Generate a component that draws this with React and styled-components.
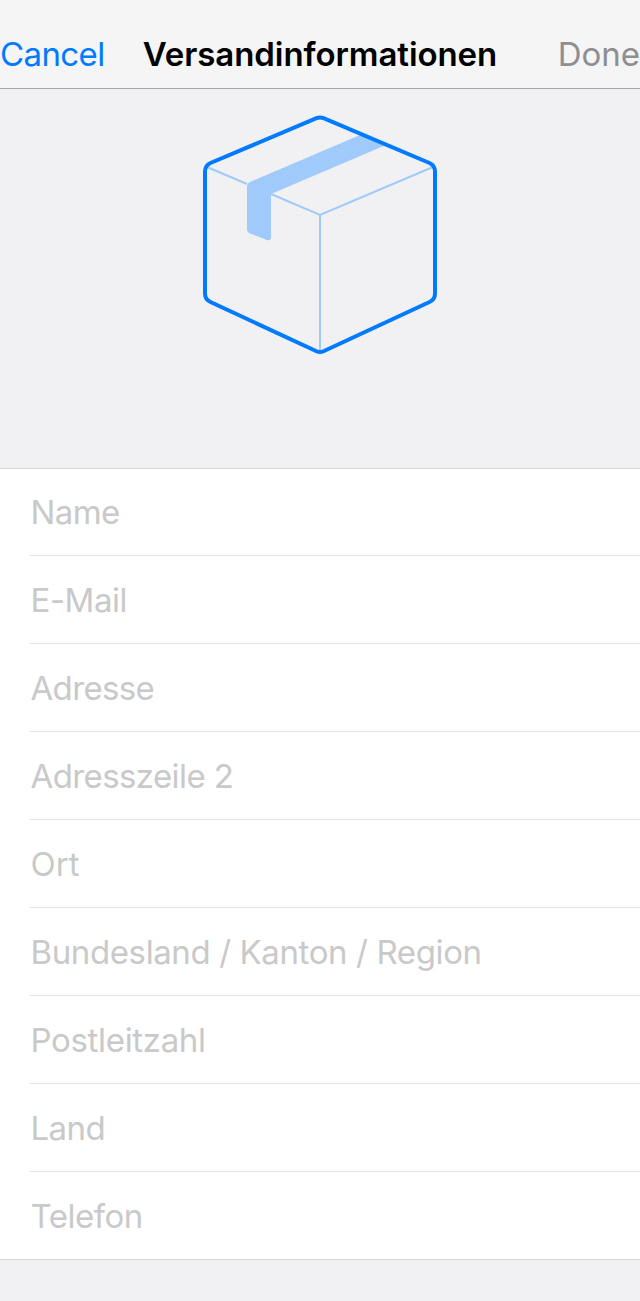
import React from 'react';
import styled, { createGlobalStyle } from 'styled-components';

const GlobalStyle = createGlobalStyle`
  *, *::before, *::after { box-sizing: border-box; }
  body { margin: 0; background: #f1f1f4; font-family: Inter, "Liberation Sans", sans-serif; }
`;

const Screen = styled.main`
  display: flex;
  flex-direction: column;
  width: 640px;
  height: 1301px;
  overflow: hidden;
  background: #f1f1f4;
`;

const NavBar = styled.header`
  display: grid;
  grid-template-columns: 1fr auto 1fr;
  align-items: center;
  height: 89px;
  padding-top: 20px;
  background: #f5f5f5;
  border-bottom: 1px solid #a7a7aa;
`;

const NavButton = styled.button`
  justify-self: ${(p) => p.$side};
  padding: 0;
  border: 0;
  background: none;
  font: 400 33px/40px Inter, "Liberation Sans", sans-serif;
  letter-spacing: ${(p) => p.$spacing}px;
  color: ${(p) => (p.disabled ? '#8e8e93' : '#007aff')};
`;

const Title = styled.h1`
  margin: 0;
  font-size: 33px;
  font-weight: 600;
  line-height: 40px;
  letter-spacing: -0.08px;
  color: #000;
`;

const Hero = styled.section`
  display: flex;
  justify-content: center;
  height: 379px;
  padding-top: 23px;
`;

const Form = styled.form`
  display: flex;
  flex-direction: column;
  height: 792px;
  padding-left: 30px;
  background: #fff;
  border-top: 1px solid #d6d6d9;
  border-bottom: 1px solid #d6d6d9;
`;

const Field = styled.label`
  display: flex;
  align-items: center;
  height: 88px;
  padding-left: 0.5px;
  border-bottom: 1px solid #e5e5e7;
  font-size: 33px;
  line-height: 40px;
  letter-spacing: ${(p) => p.$spacing}px;
  color: #c9c9c9;
  white-space: nowrap;

  &:first-child {
    height: 87px;
  }

  &:last-child {
    height: 87px;
    border-bottom: 0;
  }
`;

const fields = [
  { label: 'Name', spacing: -0.6 },
  { label: 'E-Mail', spacing: -0.45 },
  { label: 'Adresse', spacing: -0.65 },
  { label: 'Adresszeile 2', spacing: -0.6 },
  { label: 'Ort', spacing: 0 },
  { label: 'Bundesland / Kanton / Region', spacing: -0.39 },
  { label: 'Postleitzahl', spacing: -0.33 },
  { label: 'Land', spacing: -0.6 },
  { label: 'Telefon', spacing: -0.5 },
];

const PackageIcon = () => (
  <svg width="240" height="244" viewBox="200 112 240 244" fill="none" aria-hidden="true">
    <path d="M360 135L250 182Q247 183.500 247 187V229Q247 232 250 233.500L267 240Q271 241 271 237V194L386 145Z" fill="#a0cafa" />
    <path d="M207 167L247 184M271 194L320 215L433 167M320 215V350" stroke="#a0cafa" strokeWidth="2" />
    <path
      d="M316.500 118.200Q320 116.800 323.500 118.200L429.500 163Q435 165.500 435 171.500V293.500Q435 299.500 429.500 302L323.500 351.200Q320 352.800 316.500 351.200L210.500 302Q205 299.500 205 293.500V171.500Q205 165.500 210.500 163Z"
      stroke="#007aff"
      strokeWidth="4"
    />
  </svg>
);

export default function App() {
  return (
    <Screen>
      <GlobalStyle />
      <NavBar>
        <NavButton type="button" $side="start" $spacing={-0.6}>Cancel</NavButton>
        <Title>Versandinformationen</Title>
        <NavButton type="button" disabled $side="end" $spacing={0}>Done</NavButton>
      </NavBar>
      <Hero>
        <PackageIcon />
      </Hero>
      <Form>
        {fields.map(({ label, spacing }) => (
          <Field key={label} $spacing={spacing}>{label}</Field>
        ))}
      </Form>
    </Screen>
  );
}
